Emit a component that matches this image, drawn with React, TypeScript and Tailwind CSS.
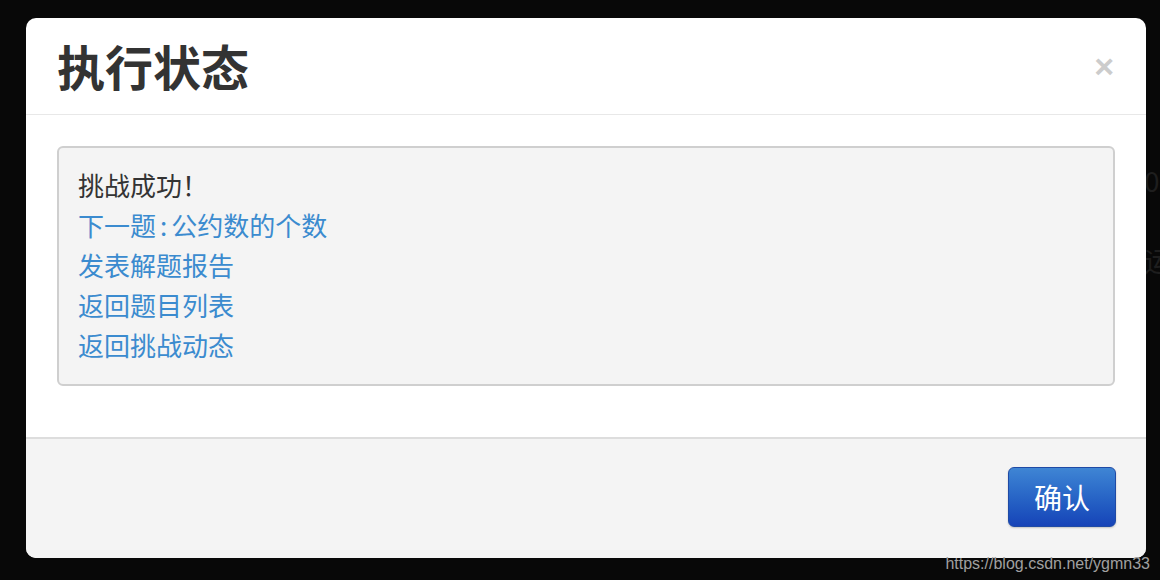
import React from 'react';

const links = ['发表解题报告', '返回题目列表', '返回挑战动态'];

const App = () => {
  return (
    <div
      className="relative w-[1160px] h-[580px] overflow-hidden bg-[#080808] pt-[18px] pl-[26px]"
      style={{ fontFamily: '"Noto Sans CJK SC", "Liberation Sans", sans-serif' }}
    >
      {/* faint code behind the overlay */}
      <div className="absolute right-0 top-[140px] w-[14px] overflow-hidden text-[28px] leading-[80px] text-[#1e1e1e]">
        <div className="-ml-[2px]">0</div>
        <div className="-ml-[2px]">运</div>
      </div>

      <div className="relative w-[1120px] h-[540px] rounded-[10px] bg-white overflow-hidden flex flex-col">
        {/* header */}
        <div className="h-[97px] shrink-0 border-b border-[#e8e8e8] flex items-center justify-between pl-[31px] pr-[32px]">
          <h1 className="text-[48px] font-bold leading-none text-[#333] -mt-[2px]">执行状态</h1>
          <span
            className="text-[34px] font-bold leading-none text-[#cccccc]"
            style={{ fontFamily: '"Liberation Sans", sans-serif' }}
          >
            ×
          </span>
        </div>

        {/* body */}
        <div className="pt-[31px] px-[31px] pb-[51px]">
          <div className="h-[240px] rounded-[6px] border-2 border-[#cfcfcf] bg-[#f4f4f4] pl-[19px] pt-[17px] text-[26px] leading-[40px]">
            <div className="text-[#333]">挑战成功！</div>
            <div className="text-[#3b8bcf]">
              下一题<span className="px-[4px]">:</span>公约数的个数
            </div>
            {links.map((t) => (
              <div key={t} className="text-[#3b8bcf]">
                {t}
              </div>
            ))}
          </div>
        </div>

        {/* footer */}
        <div className="flex-1 border-t-2 border-[#dddddd] bg-[#f4f4f4] flex justify-end pt-[28px] pr-[30px]">
          <button className="w-[108px] h-[60px] rounded-[6px] border border-[#1f4aa5] bg-gradient-to-b from-[#3f85d4] to-[#1743b8] text-white text-[28px] leading-none shadow-[0_1px_2px_rgba(0,0,0,0.2)]">
            确认
          </button>
        </div>
      </div>

      <div
        className="absolute right-[10px] bottom-[8px] text-[16px] leading-none text-[#a0a0a0]"
        style={{ fontFamily: '"Liberation Sans", sans-serif' }}
      >
        https://blog.csdn.net/ygmn33
      </div>
    </div>
  );
};

export default App;
